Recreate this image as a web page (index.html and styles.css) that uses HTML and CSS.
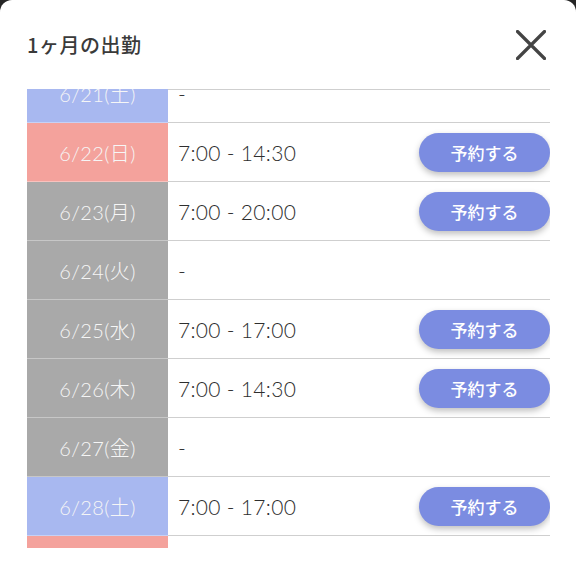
FILE: index.html
```html
<!DOCTYPE html>
<html lang="ja">
<head>
    <meta charset="UTF-8">
    <title>1ヶ月の出勤</title>
    <meta name="viewport" content="width=device-width, initial-scale=1.0">
    <link rel="stylesheet" href="styles.css">
</head>
<body>
<div class="sheet">
    <div class="sheet-head">
        <h1 class="sheet-title">1ヶ月の出勤</h1>
        <button class="close-btn" aria-label="閉じる">
            <svg width="30" height="30" viewBox="0 0 30 30">
                <path d="M1.5 1.5 L28.5 28.5 M28.5 1.5 L1.5 28.5" stroke="#444" stroke-width="3.2" stroke-linecap="round" fill="none"/>
            </svg>
        </button>
    </div>
    <div class="list-viewport">
        <div class="list">
            <div class="row">
                <div class="date sat">6/21(土)</div>
                <div class="slot"><span class="time">-</span></div>
            </div>
            <div class="row">
                <div class="date sun">6/22(日)</div>
                <div class="slot"><span class="time">7:00 - 14:30</span><button class="book-btn">予約する</button></div>
            </div>
            <div class="row">
                <div class="date">6/23(月)</div>
                <div class="slot"><span class="time">7:00 - 20:00</span><button class="book-btn">予約する</button></div>
            </div>
            <div class="row">
                <div class="date">6/24(火)</div>
                <div class="slot"><span class="time">-</span></div>
            </div>
            <div class="row">
                <div class="date">6/25(水)</div>
                <div class="slot"><span class="time">7:00 - 17:00</span><button class="book-btn">予約する</button></div>
            </div>
            <div class="row">
                <div class="date">6/26(木)</div>
                <div class="slot"><span class="time">7:00 - 14:30</span><button class="book-btn">予約する</button></div>
            </div>
            <div class="row">
                <div class="date">6/27(金)</div>
                <div class="slot"><span class="time">-</span></div>
            </div>
            <div class="row">
                <div class="date sat">6/28(土)</div>
                <div class="slot"><span class="time">7:00 - 17:00</span><button class="book-btn">予約する</button></div>
            </div>
            <div class="row">
                <div class="date sun">6/29(日)</div>
                <div class="slot"><span class="time">-</span></div>
            </div>
        </div>
    </div>
</div>
</body>
</html>
```

FILE: styles.css
```css
body {
    margin: 0;
    padding: 0;
    background: #262626;
    font-family: "Noto Sans CJK JP", "Noto Sans", sans-serif;
}
.sheet {
    background: #fff;
    border-radius: 12px 12px 0 0;
    height: 588px;
    padding: 0 26px 0 27px;
    box-sizing: border-box;
}
.sheet-head {
    height: 89px;
    display: flex;
    align-items: center;
    justify-content: space-between;
}
.sheet-title {
    margin: 0;
    font-size: 20px;
    font-weight: 500;
    color: #3a3a3a;
    letter-spacing: 0.5px;
}
.close-btn {
    border: none;
    background: none;
    padding: 0;
    margin-right: 4px;
    width: 30px;
    height: 30px;
    display: flex;
}
/* スクロール領域 */
.list-viewport {
    height: 459px;
    overflow: hidden;
    position: relative;
}
.list-viewport::before {
    content: "";
    position: absolute;
    top: 0; left: 141px; right: 0;
    height: 1px;
    background: #cfcfcf;
    z-index: 1;
}
.list {
    margin-top: -25px;
}
.row {
    display: grid;
    grid-template-columns: 141px 1fr;
    height: 59px;
}
.date {
    background: #a9a9a9;
    color: #f6f6f6;
    font-family: "Lato", "Noto Sans CJK JP", sans-serif;
    font-size: 20px;
    font-weight: 300;
    letter-spacing: 0.4px;
    display: flex;
    align-items: center;
    justify-content: center;
    border-bottom: 1px solid rgba(255,255,255,0.35);
}
.date.sat {
    background: #a8b8f0;
}
.date.sun {
    background: #f4a29c;
}
.slot {
    display: flex;
    align-items: center;
    justify-content: space-between;
    padding-left: 10px;
    border-bottom: 1px solid #cfcfcf;
}
.time {
    font-family: "Lato", "Noto Sans CJK JP", sans-serif;
    font-size: 21px;
    font-weight: 300;
    letter-spacing: 0.3px;
    color: #2e2e2e;
}
.book-btn {
    width: 131px;
    height: 39px;
    border: none;
    border-radius: 20px;
    background: #7b8ce1;
    color: #fff;
    font-family: inherit;
    font-size: 17px;
    font-weight: 500;
    box-shadow: 0 3px 6px rgba(0,0,0,0.25);
}
```
